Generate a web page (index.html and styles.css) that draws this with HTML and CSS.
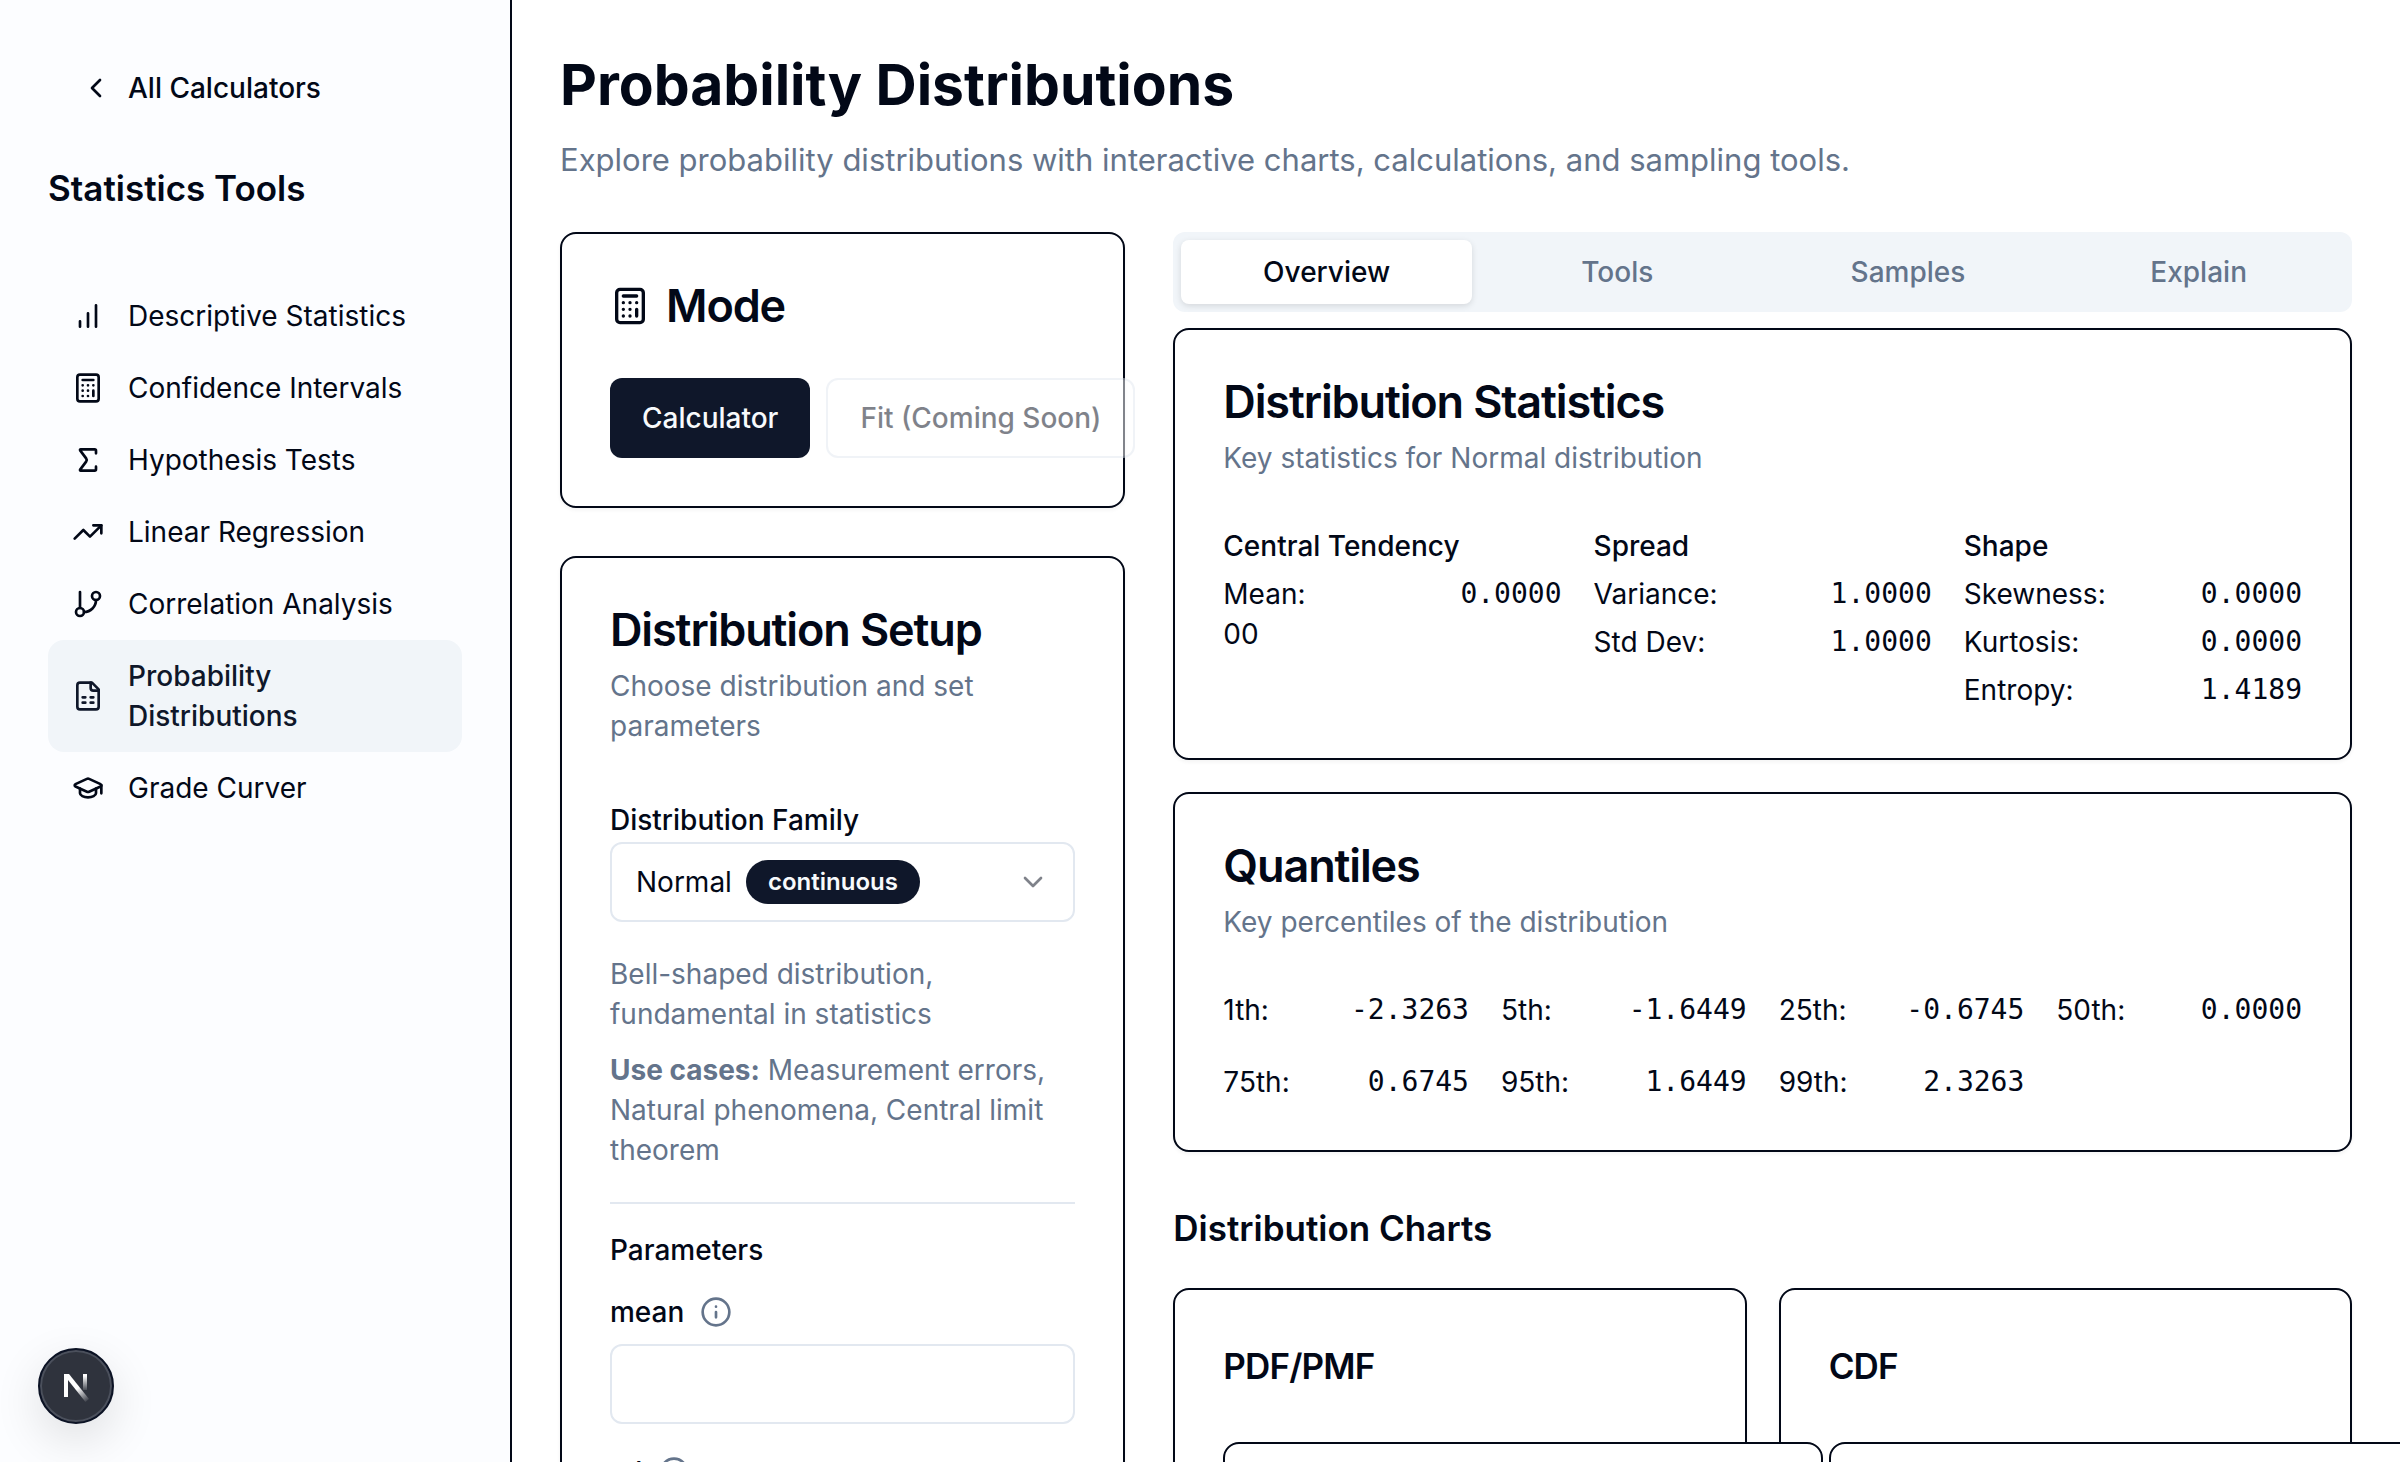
FILE: index.html
```html
<!DOCTYPE html>
<html lang="en">
<head>
<meta charset="utf-8">
<meta name="viewport" content="width=device-width, initial-scale=1">
<title>Probability Distributions</title>
<link rel="stylesheet" href="styles.css">
</head>
<body>
<svg class="sprite" aria-hidden="true">
  <symbol id="i-calculator" viewBox="0 0 24 24"><rect width="16" height="20" x="4" y="2" rx="2"/><path d="M8 6h8M16 14v4M16 10h.01M12 10h.01M8 10h.01M12 14h.01M8 14h.01M12 18h.01M8 18h.01"/></symbol>
  <symbol id="i-info" viewBox="0 0 24 24"><circle cx="12" cy="12" r="10"/><path d="M12 16v-4M12 8h.01"/></symbol>
</svg>
<div class="shell">
  <aside class="sidebar">
    <a class="back" href="#">
      <svg class="icon" viewBox="0 0 24 24"><path d="m15 18-6-6 6-6"/></svg>
      All Calculators
    </a>
    <h2 class="sidebar-title">Statistics Tools</h2>
    <nav class="nav">
      <a class="nav-item" href="#"><svg class="icon" viewBox="0 0 24 24"><path d="M12 20V10M18 20V4M6 20v-4"/></svg><span>Descriptive Statistics</span></a>
      <a class="nav-item" href="#"><svg class="icon"><use href="#i-calculator"/></svg><span>Confidence Intervals</span></a>
      <a class="nav-item" href="#"><svg class="icon" viewBox="0 0 24 24"><path d="M18 7V5a1 1 0 0 0-1-1H6.5a.5.5 0 0 0-.4.8l4.500 6a2 2 0 0 1 0 2.400l-4.500 6a.5.5 0 0 0 .4.8H17a1 1 0 0 0 1-1v-2"/></svg><span>Hypothesis Tests</span></a>
      <a class="nav-item" href="#"><svg class="icon" viewBox="0 0 24 24"><path d="m22 7-8.500 8.500-5-5L2 17"/><path d="M16 7h6v6"/></svg><span>Linear Regression</span></a>
      <a class="nav-item" href="#"><svg class="icon" viewBox="0 0 24 24"><path d="M6 3v12"/><circle cx="18" cy="6" r="3"/><circle cx="6" cy="18" r="3"/><path d="M18 9a9 9 0 0 1-9 9"/></svg><span>Correlation Analysis</span></a>
      <a class="nav-item nav-item-active" href="#" aria-current="page"><svg class="icon" viewBox="0 0 24 24"><path d="M15 2H6a2 2 0 0 0-2 2v16a2 2 0 0 0 2 2h12a2 2 0 0 0 2-2V7Z"/><path d="M14 2v4a2 2 0 0 0 2 2h4M8 13h2M14 13h2M8 17h2M14 17h2"/></svg><span>Probability Distributions</span></a>
      <a class="nav-item" href="#"><svg class="icon" viewBox="0 0 24 24"><path d="M21.420 10.922a1 1 0 0 0-.019-1.838L12.830 5.180a2 2 0 0 0-1.660 0L2.600 9.080a1 1 0 0 0 0 1.832l8.570 3.908a2 2 0 0 0 1.660 0z"/><path d="M22 10v6M6 12.500V16a6 3 0 0 0 12 0v-3.500"/></svg><span>Grade Curver</span></a>
    </nav>
  </aside>

  <main class="main">
    <header class="page-header">
      <h1 class="page-title">Probability Distributions</h1>
      <p class="page-intro">Explore probability distributions with interactive charts, calculations, and sampling tools.</p>
    </header>

    <div class="columns">
      <div class="setup">
        <section class="card">
          <h3 class="card-title card-title-icon"><svg class="icon icon-lg"><use href="#i-calculator"/></svg>Mode</h3>
          <div class="mode-buttons">
            <button class="btn btn-primary" type="button">Calculator</button>
            <button class="btn btn-outline" type="button" disabled>Fit (Coming Soon)</button>
          </div>
        </section>

        <section class="card">
          <h3 class="card-title">Distribution Setup</h3>
          <p class="card-text">Choose distribution and set parameters</p>
          <div class="card-body">
            <div class="family">
              <label class="label" for="family">Distribution Family</label>
              <div class="select-box">
                <select class="select" id="family"><option>Normal</option><option>Uniform</option><option>Exponential</option><option>Binomial</option><option>Poisson</option></select>
                <span class="badge">continuous</span>
                <svg class="icon select-chevron" viewBox="0 0 24 24"><path d="m6 9 6 6 6-6"/></svg>
              </div>
            </div>
            <div class="notes">
              <p>Bell-shaped distribution, fundamental in statistics</p>
              <p><strong>Use cases:</strong> Measurement errors, Natural phenomena, Central limit theorem</p>
            </div>
            <hr class="separator">
            <h4 class="params-title">Parameters</h4>
            <div class="field">
              <div class="field-head"><label class="field-label" for="mean">mean</label><svg class="icon icon-muted"><use href="#i-info"/></svg></div>
              <input class="input" id="mean" type="text">
            </div>
            <div class="field">
              <div class="field-head"><label class="field-label" for="sd">sd</label><svg class="icon icon-muted"><use href="#i-info"/></svg></div>
              <input class="input" id="sd" type="text">
            </div>
          </div>
        </section>
      </div>

      <div class="results">
        <div class="tabs" role="tablist">
          <button class="tab tab-active" type="button" role="tab" aria-selected="true">Overview</button>
          <button class="tab" type="button" role="tab" aria-selected="false">Tools</button>
          <button class="tab" type="button" role="tab" aria-selected="false">Samples</button>
          <button class="tab" type="button" role="tab" aria-selected="false">Explain</button>
        </div>

        <div class="panel">
          <section class="card">
            <h3 class="card-title">Distribution Statistics</h3>
            <p class="card-text">Key statistics for Normal distribution</p>
            <div class="card-body stats">
              <div class="stat-group">
                <h4 class="stat-title">Central Tendency</h4>
                <div>
                  <div class="stat"><span>Mean:</span><span class="mono">0.0000</span></div>
                  <div>00</div>
                </div>
              </div>
              <div class="stat-group">
                <h4 class="stat-title">Spread</h4>
                <div class="stat"><span>Variance:</span><span class="mono">1.0000</span></div>
                <div class="stat"><span>Std Dev:</span><span class="mono">1.0000</span></div>
              </div>
              <div class="stat-group">
                <h4 class="stat-title">Shape</h4>
                <div class="stat"><span>Skewness:</span><span class="mono">0.0000</span></div>
                <div class="stat"><span>Kurtosis:</span><span class="mono">0.0000</span></div>
                <div class="stat"><span>Entropy:</span><span class="mono">1.4189</span></div>
              </div>
            </div>
          </section>

          <section class="card">
            <h3 class="card-title">Quantiles</h3>
            <p class="card-text">Key percentiles of the distribution</p>
            <div class="card-body quantiles">
              <div class="stat"><span>1th:</span><span class="mono">-2.3263</span></div>
              <div class="stat"><span>5th:</span><span class="mono">-1.6449</span></div>
              <div class="stat"><span>25th:</span><span class="mono">-0.6745</span></div>
              <div class="stat"><span>50th:</span><span class="mono">0.0000</span></div>
              <div class="stat"><span>75th:</span><span class="mono">0.6745</span></div>
              <div class="stat"><span>95th:</span><span class="mono">1.6449</span></div>
              <div class="stat"><span>99th:</span><span class="mono">2.3263</span></div>
            </div>
          </section>
        </div>

        <h3 class="charts-title">Distribution Charts</h3>
        <div class="charts">
          <section class="card">
            <h4 class="chart-title">PDF/PMF</h4>
            <div class="chart-frame"></div>
          </section>
          <section class="card">
            <h4 class="chart-title">CDF</h4>
            <div class="chart-frame"></div>
          </section>
        </div>
      </div>
    </div>
  </main>
</div>

<button class="dev-badge" type="button" aria-label="Open developer tools">
  <svg class="dev-logo" viewBox="0 0 40 40" fill="none">
    <defs>
      <linearGradient id="g-diag" x1="22" y1="22" x2="32" y2="36" gradientUnits="userSpaceOnUse"><stop stop-color="#fff"/><stop offset="1" stop-color="#fff" stop-opacity="0"/></linearGradient>
      <linearGradient id="g-stem" x1="29" y1="10" x2="29" y2="26" gradientUnits="userSpaceOnUse"><stop stop-color="#fff"/><stop offset="1" stop-color="#fff" stop-opacity="0"/></linearGradient>
    </defs>
    <path d="M8 8h5L33 33l-3.500 3L8 9z" fill="url(#g-diag)"/>
    <path d="M8 8h4v23H8z" fill="#fff"/>
    <path d="M27 8h4v16h-4z" fill="url(#g-stem)"/>
  </svg>
</button>
</body>
</html>
```
FILE: styles.css
```css
:root {
  --ink: #020817;
  --navy: #0f172a;
  --muted: #64748b;
  --surface: #f1f5f9;
  --line: #e2e8f0;
  --sans: Inter, "Liberation Sans", sans-serif;
  --mono: "DejaVu Sans Mono", "Liberation Mono", monospace;
}

* {
  box-sizing: border-box;
  margin: 0;
}

body {
  background: #fff;
  color: var(--ink);
  font-family: var(--sans);
  font-size: 28px;
  line-height: 40px;
}

button,
input,
select {
  font: inherit;
  color: inherit;
}

a {
  color: inherit;
  text-decoration: none;
}

.sprite {
  display: none;
}

.icon {
  flex: none;
  width: 32px;
  height: 32px;
  fill: none;
  stroke: currentColor;
  stroke-width: 2;
  stroke-linecap: round;
  stroke-linejoin: round;
}

.icon-lg {
  width: 40px;
  height: 40px;
}

.icon-muted {
  color: var(--muted);
}

.shell {
  display: flex;
  height: 100vh;
}

/* Sidebar */
.sidebar {
  flex: none;
  width: 512px;
  padding: 48px;
  border-right: 2px solid var(--ink);
  background: #fcfdff;
}

.back {
  display: flex;
  align-items: center;
  gap: 16px;
  height: 80px;
  padding: 0 32px;
  font-weight: 500;
}

.sidebar-title {
  margin: 32px 0 64px;
  font-size: 35px;
  font-weight: 600;
  line-height: 56px;
}

.nav {
  display: flex;
  flex-direction: column;
}

.nav-item {
  display: flex;
  align-items: center;
  gap: 24px;
  padding: 16px 24px;
  border-radius: 16px;
}

.nav-item-active {
  background: var(--surface);
  color: var(--navy);
  font-weight: 500;
}

/* Page */
.main {
  flex: 1;
  min-width: 0;
  padding: 48px;
  overflow: hidden;
}

.page-title {
  font-size: 57px;
  font-weight: 700;
  line-height: 74px;
}

.page-intro {
  margin-top: 14px;
  color: var(--muted);
  font-size: 31px;
  line-height: 48px;
}

.columns {
  display: grid;
  grid-template-columns: repeat(3, minmax(0, 1fr));
  gap: 48px;
  margin-top: 48px;
}

.setup {
  display: flex;
  flex-direction: column;
  gap: 48px;
}

.results {
  grid-column: span 2;
}

/* Cards */
.card {
  padding: 48px;
  border: 2px solid var(--ink);
  border-radius: 16px;
  background: #fff;
  box-shadow: 0 2px 4px rgb(0 0 0 / 5%);
}

.card-title {
  font-size: 45px;
  font-weight: 600;
  line-height: 48px;
  letter-spacing: -0.025em;
}

.card-title-icon {
  display: flex;
  align-items: center;
  gap: 16px;
}

.card-text {
  margin-top: 12px;
  color: var(--muted);
}

.card-body {
  margin-top: 48px;
}

/* Mode */
.mode-buttons {
  display: flex;
  gap: 16px;
  margin-top: 48px;
}

.btn {
  flex: none;
  height: 80px;
  padding: 0 32px;
  border: 0;
  border-radius: 12px;
  font-weight: 500;
  white-space: nowrap;
}

.btn-primary {
  background: var(--navy);
  color: #f8fafc;
}

.btn-outline {
  border: 2px solid var(--line);
  background: #fff;
  opacity: 0.5;
}

/* Setup form */
.label,
.field-label,
.params-title {
  font-size: 28px;
  font-weight: 500;
  line-height: 28px;
}

.label {
  display: block;
  padding: 12px 0 8px;
}

.select-box {
  display: grid;
  align-items: center;
}

.select-box > * {
  grid-area: 1 / 1;
}

.select,
.input {
  width: 100%;
  height: 80px;
  padding: 0 24px;
  border: 2px solid var(--line);
  border-radius: 12px;
  background: #fff;
}

.select {
  appearance: none;
}

.badge {
  justify-self: start;
  margin-left: 136px;
  padding: 6px 22px;
  border-radius: 22px;
  background: var(--navy);
  color: #f8fafc;
  font-size: 24px;
  font-weight: 600;
  line-height: 32px;
  pointer-events: none;
}

.select-chevron {
  justify-self: end;
  margin-right: 26px;
  opacity: 0.5;
  pointer-events: none;
}

.notes {
  display: flex;
  flex-direction: column;
  gap: 16px;
  margin-top: 32px;
  color: var(--muted);
}

.separator {
  height: 2px;
  margin: 32px 0;
  border: 0;
  background: var(--line);
}

.field {
  margin-top: 32px;
}

.field-head {
  display: flex;
  align-items: center;
  gap: 16px;
  margin-bottom: 16px;
}

.input {
  display: block;
}

/* Tabs */
.tabs {
  display: grid;
  grid-template-columns: repeat(4, minmax(0, 1fr));
  padding: 8px;
  border-radius: 12px;
  background: var(--surface);
}

.tab {
  height: 64px;
  border: 0;
  border-radius: 8px;
  background: none;
  color: var(--muted);
  font-weight: 500;
}

.tab-active {
  background: #fff;
  color: var(--ink);
  box-shadow: 0 2px 6px rgb(0 0 0 / 12%);
}

.panel {
  display: flex;
  flex-direction: column;
  gap: 32px;
  margin-top: 16px;
}

/* Figures */
.stats {
  display: grid;
  grid-template-columns: repeat(3, minmax(0, 1fr));
  gap: 32px;
}

.stat-group {
  display: flex;
  flex-direction: column;
  gap: 8px;
}

.stat-title {
  font-size: 28px;
  font-weight: 500;
}

.stat {
  display: flex;
  justify-content: space-between;
}

.mono {
  font-family: var(--mono);
}

.quantiles {
  display: grid;
  grid-template-columns: repeat(4, minmax(0, 1fr));
  gap: 32px;
}

/* Charts */
.charts-title {
  margin: 48px 0 32px;
  font-size: 35px;
  font-weight: 600;
  line-height: 56px;
}

.charts {
  display: grid;
  grid-template-columns: repeat(2, minmax(0, 1fr));
  gap: 32px;
}

.chart-title {
  font-size: 35px;
  font-weight: 600;
  line-height: 56px;
  letter-spacing: -0.025em;
}

.chart-frame {
  position: relative;
  width: 600px;
  height: 400px;
  margin-top: 48px;
  border: 2px solid var(--ink);
  border-radius: 16px;
  background: #fff;
}

/* Floating developer badge */
.dev-badge {
  position: fixed;
  bottom: 38px;
  left: 38px;
  display: grid;
  place-items: center;
  width: 76px;
  height: 76px;
  padding: 0;
  border: 2px solid #0b1224;
  border-radius: 50%;
  background: #2f333d;
  box-shadow: inset 0 0 0 2px #4b505c, 0 16px 48px rgb(0 0 0 / 12%);
}

.dev-logo {
  width: 40px;
  height: 40px;
}
```
